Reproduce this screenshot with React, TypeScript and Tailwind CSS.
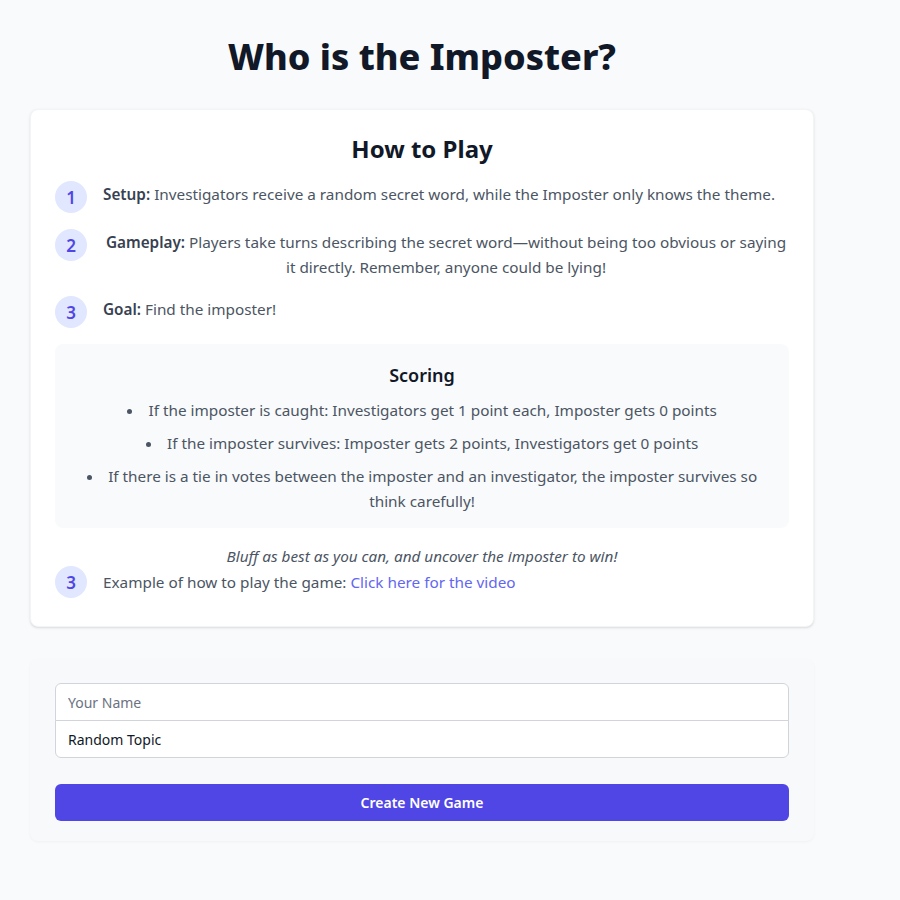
const font = { fontFamily: '"Noto Sans", "Open Sans", sans-serif' };

function StepNumber({ n }: { n: number }) {
  return (
    <div className="flex h-8 w-8 shrink-0 items-center justify-center rounded-full bg-[#e0e7ff] text-[17px] font-semibold text-[#4f46e5]">
      {n}
    </div>
  );
}

export default function App() {
  return (
    <main className="min-h-screen bg-[#f9fafb] pt-[37px] pb-10" style={font}>
      <div className="ml-[30px] w-[784px]">
        <h1 className="text-center text-4xl font-extrabold text-[#111827]">
          Who is the Imposter?
        </h1>

        <section className="mt-8 rounded-lg border border-[#f3f4f6] bg-white px-6 pt-[23px] pb-6 text-center shadow-sm">
          <h2 className="mb-4 text-2xl font-bold text-[#111827]">How to Play</h2>

          <div className="space-y-4 text-[15.3px] leading-[25px] text-[#4b5563]">
            <div className="flex items-start gap-4">
              <StepNumber n={1} />
              <p className="pt-px">
                <span className="font-semibold text-[#374151]">Setup:</span>{" "}
                Investigators receive a random secret word, while the Imposter only knows the theme.
              </p>
            </div>
            <div className="flex items-start gap-4">
              <StepNumber n={2} />
              <p className="pt-px">
                <span className="font-semibold text-[#374151]">Gameplay:</span>{" "}
                Players take turns describing the secret word—without being too obvious or saying it
                directly. Remember, anyone could be lying!
              </p>
            </div>
            <div className="flex items-start gap-4">
              <StepNumber n={3} />
              <p className="pt-px">
                <span className="font-semibold text-[#374151]">Goal:</span> Find the imposter!
              </p>
            </div>

            <div className="rounded-lg bg-[#f9fafb] px-4 pt-4 pb-[14px]">
              <h3 className="mb-2 text-lg font-semibold leading-[30px] text-[#111827]">Scoring</h3>
              <ul className="list-inside list-disc space-y-2">
                <li>If the imposter is caught: Investigators get 1 point each, Imposter gets 0 points</li>
                <li>If the imposter survives: Imposter gets 2 points, Investigators get 0 points</li>
                <li>
                  If there is a tie in votes between the imposter and an investigator, the imposter
                  survives so think carefully!
                </li>
              </ul>
            </div>

            <p className="italic">Bluff as best as you can, and uncover the imposter to win!</p>
          </div>

          <div className="-mt-[3px] flex items-center gap-4 text-[15.3px] leading-[25px] text-[#4b5563]">
            <StepNumber n={3} />
            <p>
              Example of how to play the game:{" "}
              <a href="#" className="text-[#6366f1]">
                Click here for the video
              </a>
            </p>
          </div>
          <div className="h-1" />
        </section>

        <section className="mt-8 rounded-lg bg-[#f8f9fb] px-6 pt-6 pb-5 shadow-[0_1px_3px_rgba(0,0,0,0.04)]">
          <div className="flex flex-col px-px">
            <input
              placeholder="Your Name"
              className="h-[38px] rounded-t-md border border-[#d1d5db] bg-white px-3 text-sm text-[#111827] placeholder:text-[#6b7280] focus:outline-none"
            />
            <input
              defaultValue="Random Topic"
              className="-mt-px h-[38px] rounded-b-md border border-[#d1d5db] bg-white px-3 text-sm text-[#111827] focus:outline-none"
            />
          </div>
          <div className="px-px">
            <button className="mt-[26px] h-[37px] w-full rounded-md bg-[#4f46e5] text-sm font-semibold text-white">
              Create New Game
            </button>
          </div>
        </section>
      </div>
    </main>
  );
}
